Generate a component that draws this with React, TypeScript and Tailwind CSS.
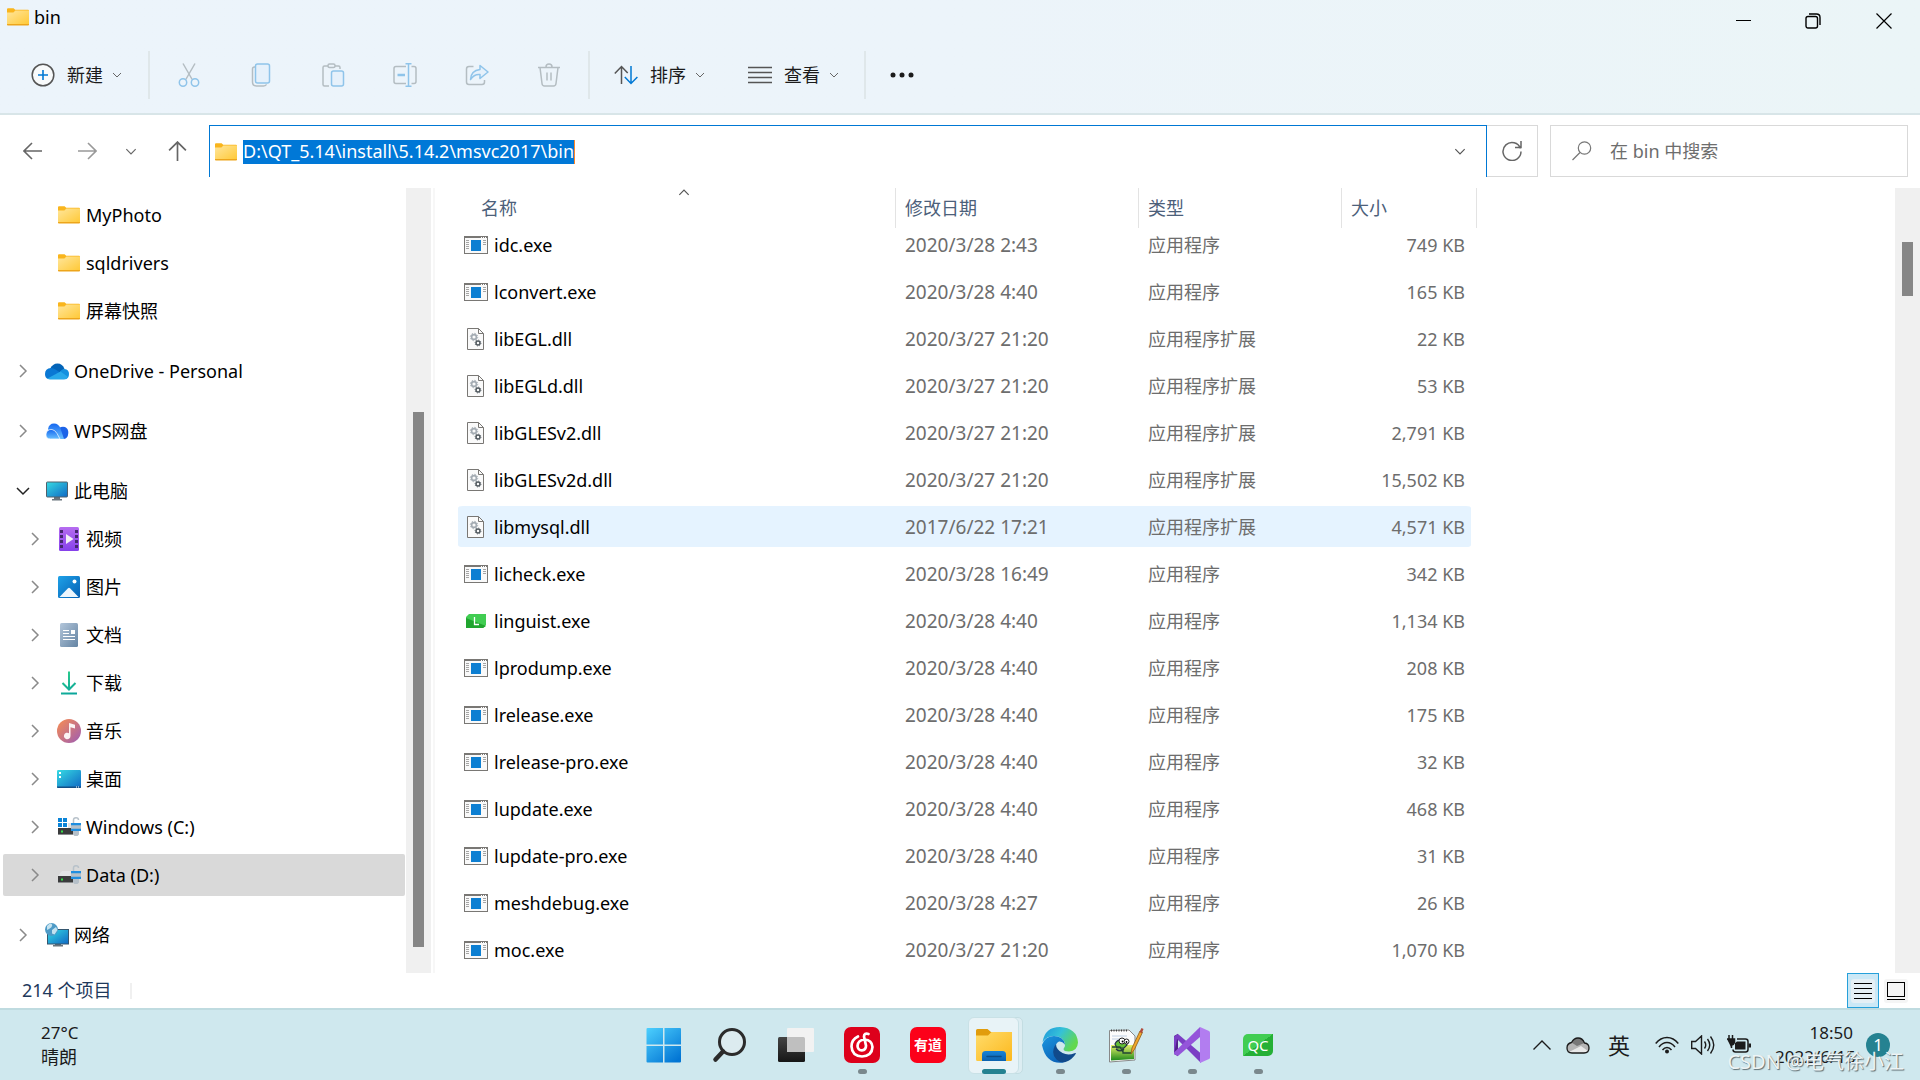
import type { ReactNode } from "react";

type IconProps = { className?: string };

/* ---------- icons ---------- */

function Chevron({ className = "" }: IconProps) {
  return (
    <svg viewBox="0 0 10 6" fill="none" stroke="currentColor" className={className}>
      <path d="M1 1l4 4 4-4" />
    </svg>
  );
}

function FolderIcon({ className = "h-[18px] w-[22px]" }: IconProps) {
  return (
    <svg viewBox="0 0 22 18" className={className}>
      <defs>
        <linearGradient id="folder" x1="0" y1="0" x2="1" y2="1">
          <stop offset="0" stopColor="#ffe69c" />
          <stop offset="1" stopColor="#ffc937" />
        </linearGradient>
      </defs>
      <path d="M0 1.2Q0 .3 1 .3h5.6l1.6 1.5H21q1 0 1 1V5H0z" fill="#f9b51d" />
      <path d="M0 4.6h6.4L8.4 2.4H22V16.4H0z" fill="url(#folder)" />
      <path d="M0 16h22v.6q0 .9-.9.9H.9q-.9 0-.9-.9z" fill="#eda51b" />
    </svg>
  );
}

function NewIcon() {
  return (
    <svg viewBox="0 0 24 24" fill="none" className="size-6">
      <circle cx="12" cy="12" r="10.8" stroke="#555" strokeWidth="1.5" fill="#f8fafb" />
      <path d="M12 7v10M7 12h10" stroke="#0078d4" strokeWidth="1.6" />
    </svg>
  );
}

function CutIcon() {
  return (
    <svg viewBox="0 0 24 24" fill="none" strokeWidth="1.5" className="size-6">
      <path d="M6 .5l9.2 16M18 .5L8.8 16.500" stroke="#b4bdc2" />
      <circle cx="6" cy="19.500" r="3.700" stroke="#8fc4ea" />
      <circle cx="18" cy="19.500" r="3.700" stroke="#8fc4ea" />
    </svg>
  );
}

function CopyIcon() {
  return (
    <svg viewBox="0 0 24 24" fill="none" strokeWidth="1.5" className="size-6">
      <path d="M6 4H5.500Q3.500 4 3.500 6v13q0 4 4 4h7q2.500 0 3-1.600" stroke="#b4bdc2" />
      <rect x="6.500" y="1" width="14" height="19" rx="2" stroke="#8fc4ea" fill="#e6f1fb" />
    </svg>
  );
}

function PasteIcon() {
  return (
    <svg viewBox="0 0 24 24" fill="none" strokeWidth="1.5" className="size-6">
      <path d="M8 23H3.500Q2 23 2 21.500V4.500Q2 3 3.500 3H7M14 3h3.500Q19 3 19 4.500V6" stroke="#b4bdc2" />
      <rect x="7" y="1" width="7" height="3.500" rx="1.500" stroke="#b4bdc2" />
      <rect x="10.500" y="8" width="12" height="15" rx="2" stroke="#8fc4ea" fill="#e6f1fb" />
    </svg>
  );
}

function RenameIcon() {
  return (
    <svg viewBox="0 0 24 24" fill="none" strokeWidth="1.5" className="size-6">
      <path d="M13 3.500H3Q1 3.500 1 5.500v13q0 2 2 2h10M18.500 3.500H21q2 0 2 2v13q0 2-2 2h-2.500" stroke="#b4bdc2" />
      <path d="M4.500 12H12" stroke="#8fc4ea" strokeWidth="2.500" />
      <path d="M12.500.8h6M15.500.8v22.400M12.500 23.200h6" stroke="#8fc4ea" />
    </svg>
  );
}

function ShareIcon() {
  return (
    <svg viewBox="0 0 24 24" fill="none" strokeWidth="1.5" strokeLinejoin="round" className="size-6">
      <path d="M8.500 3.500H4Q1.500 3.500 1.500 6v13q0 2.500 2.500 2.500h13q2.500 0 2.500-2.500v-2" stroke="#b4bdc2" />
      <path d="M15 2.500l8 6.500-8 6.500v-4Q9 11 5.500 16.500 6 7.500 15 6.500z" stroke="#8fc4ea" fill="#e6f1fb" />
    </svg>
  );
}

function DeleteIcon() {
  return (
    <svg viewBox="0 0 24 24" fill="none" stroke="#b4bdc2" strokeWidth="1.5" className="size-6">
      <path d="M1 4.500h22M3 4.500l2 16q.3 2.500 2.500 2.500h9q2.200 0 2.500-2.500l2-16M9 4Q9 1 12 1t3 3M10 9.500v8M14 9.500v8" />
    </svg>
  );
}

function SortIcon() {
  return (
    <svg viewBox="0 0 24 20" fill="none" strokeWidth="1.5" className="h-5 w-6">
      <path d="M7.500 19V1.500M.8 8.500l6.700-7 6.200 6.500" stroke="#555" />
      <path d="M17 1v17.500M10.800 12l6.200 6.500 6.400-6.500" stroke="#0078d4" />
    </svg>
  );
}

function ViewIcon() {
  return (
    <svg viewBox="0 0 24 18" stroke="#555" strokeWidth="1.500" className="h-[18px] w-6">
      <path d="M0 1.500h24M0 6.500h24M0 11.500h24M0 16.500h24" />
    </svg>
  );
}

function ArrowIcon({ className = "" }: IconProps) {
  return (
    <svg viewBox="0 0 20 20" fill="none" stroke="currentColor" strokeWidth="1.600" className={className}>
      <path d="M19 10H1.500M9 2l-8 8 8 8" />
    </svg>
  );
}

function OneDriveIcon() {
  return (
    <svg viewBox="0 0 24 17" className="h-[17px] w-6">
      <path d="M5 6Q7.500.5 12.500.5q5 0 7 5.500l-8 6z" fill="#0364b8" />
      <path d="M6 5q2.500 0 4.500 1.500l6 4L3 16Q0 15 0 11q0-5.500 6-6z" fill="#0a78d4" />
      <path d="M15 9q1.500-3 4.500-3 4.500.5 4.500 5 0 4-3 5z" fill="#1490df" />
      <path d="M2.500 15.500L15.500 8.500 23 14q-1 2.600-4 2.600H5q-1.600 0-2.500-1.100z" fill="#28a8ea" />
    </svg>
  );
}

function WpsCloudIcon() {
  return (
    <svg viewBox="0 0 24 17" className="h-[17px] w-6">
      <defs>
        <linearGradient id="wps" x1="0" y1="0" x2="0" y2="1">
          <stop offset="0" stopColor="#1668f0" />
          <stop offset="1" stopColor="#69c0ff" />
        </linearGradient>
      </defs>
      <path d="M14 5q3-2 6-1 3.500 1.500 3.300 6-.3 6-5.300 6h-5z" fill="#1c63e8" />
      <path d="M3 6Q4 .5 9 .5q4.500 0 6.500 5L19 16H8z" fill="url(#wps)" />
      <path d="M1 11q1-5 6-4.500 3 .5 5 4l3 5.500H5.500Q.5 16 1 11z" fill="url(#wps)" stroke="#fff" strokeWidth=".7" />
    </svg>
  );
}

function PcIcon() {
  return (
    <svg viewBox="0 0 24 20" className="h-5 w-6">
      <defs>
        <linearGradient id="screen" x1="0" y1="0" x2="1" y2="1">
          <stop offset="0" stopColor="#36dbe3" />
          <stop offset="1" stopColor="#0f68c4" />
        </linearGradient>
      </defs>
      <path d="M9 16h6v2h2v1.500H7V18h2z" fill="#69747c" />
      <rect x="1.500" y="1" width="21" height="15" rx=".8" fill="url(#screen)" stroke="#50606c" />
    </svg>
  );
}

function VideoIcon() {
  return (
    <svg viewBox="0 0 20 24" className="h-6 w-5">
      <defs>
        <linearGradient id="video" x1="0" y1="0" x2="0" y2="1">
          <stop offset="0" stopColor="#b66df0" />
          <stop offset="1" stopColor="#8540ea" />
        </linearGradient>
      </defs>
      <rect width="20" height="24" rx="1.500" fill="url(#video)" />
      <path d="M1 3h3v3H1zM1 8h3v3H1zM1 13h3v3H1zM1 18h3v3H1zM16 3h3v3h-3zM16 8h3v3h-3zM16 13h3v3h-3zM16 18h3v3h-3z" fill="#46266f" />
      <path d="M7 7l7.500 5L7 17z" fill="#f3f0f6" />
    </svg>
  );
}

function PictureIcon() {
  return (
    <svg viewBox="0 0 22 22" className="size-[22px]">
      <defs>
        <linearGradient id="photo" x1="0" y1="0" x2="1" y2="1">
          <stop offset="0" stopColor="#1ea2e8" />
          <stop offset="1" stopColor="#0660b4" />
        </linearGradient>
      </defs>
      <rect width="22" height="22" rx="1.500" fill="url(#photo)" />
      <path d="M1.500 21l8.500-8.800q1-1 2 0L20.500 21z" fill="#edf6fd" />
      <circle cx="16.500" cy="5.500" r="2" fill="#fff" />
    </svg>
  );
}

function DocumentIcon() {
  return (
    <svg viewBox="0 0 18 24" className="h-6 w-[18px]">
      <defs>
        <linearGradient id="doc" x1="0" y1="0" x2="1" y2="1">
          <stop offset="0" stopColor="#b3c6da" />
          <stop offset="1" stopColor="#6484a3" />
        </linearGradient>
      </defs>
      <rect width="18" height="24" rx="1.500" fill="url(#doc)" />
      <path d="M3 7.500h6M3 10.500h6M3 13.500h12M3 16.500h12" stroke="#fff" />
      <path d="M11 7h4v4h-4z" fill="#fff" />
    </svg>
  );
}

function DownloadIcon() {
  return (
    <svg viewBox="0 0 16 24" fill="none" strokeWidth="2" className="h-6 w-4">
      <defs>
        <linearGradient id="dl" gradientUnits="userSpaceOnUse" x1="0" y1="0" x2="10" y2="24">
          <stop offset="0" stopColor="#2fd08a" />
          <stop offset="1" stopColor="#0aa59c" />
        </linearGradient>
      </defs>
      <path d="M8 .5L8.010 18M1.500 12L8 18.500l6.500-6.500M0 22.500l16 .01" stroke="url(#dl)" />
    </svg>
  );
}

function MusicIcon() {
  return (
    <svg viewBox="0 0 24 24" className="size-6">
      <defs>
        <linearGradient id="music" x1="0" y1="0" x2="1" y2="1">
          <stop offset=".1" stopColor="#f0895a" />
          <stop offset="1" stopColor="#9c5cb4" />
        </linearGradient>
      </defs>
      <circle cx="12" cy="12" r="12" fill="url(#music)" />
      <path d="M12 4l6 1.800V9.500l-4.500-1.300V17a3.300 3.300 0 1 1-1.500-2.800z" fill="#fbf3f4" />
    </svg>
  );
}

function DesktopIcon() {
  return (
    <svg viewBox="0 0 24 18" className="h-[18px] w-6">
      <rect width="24" height="18" rx="1.200" fill="url(#screen)" />
      <path d="M0 16.500h24v.5q0 1-1 1H1q-1 0-1-1z" fill="#134f86" />
      <path d="M2 2h2v2H2zM2 6h2v2H2z" fill="#fff" />
      <path d="M19 17h1M21 17h1" stroke="#fff" />
    </svg>
  );
}

function DriveIcon({ system = false }: { system?: boolean }) {
  return (
    <svg viewBox="0 0 24 20" className="h-5 w-6">
      <path d="M5 6h10v5H1z" fill="#e2e4e6" />
      {system && (
        <>
          <path d="M0 0h11v11H0z" fill="#fff" />
          <path d="M1 1h4v4H1zM6 1h4v4H6zM1 6h4v4H1zM6 6h4v4H6z" fill="#0a84d8" />
        </>
      )}
      <rect x="1" y="11" width="15" height="7" fill="#3a3b3c" />
      <path d="M1 17.500h15" stroke="#8a8c8e" />
      <path d="M4 13.500h2v2H4z" fill="#35e04a" />
      <path d="M16.500 6V3q0-2.200 2.500-2.200T21.500 3" stroke="#b8c2ca" strokeWidth="1.500" fill="none" />
      <path d="M14 6h10v8h-2v3.500l-1.500 1.500h-3L16 17.500V14h-2z" fill="#b6c0c9" />
      <path d="M14 6h10v2.300H14zM14 11.700h10V14H14z" fill="#1f8ee0" />
    </svg>
  );
}

function NetworkIcon() {
  return (
    <svg viewBox="0 0 24 24" className="size-6">
      <path d="M10 21h6v1h2v1.500H8V22h2z" fill="#69747c" />
      <rect x="2.500" y="6.500" width="21" height="14.500" fill="url(#screen)" stroke="#35566f" />
      <circle cx="6.500" cy="6.500" r="6.500" fill="#4d9ac6" />
      <path d="M2 3q4-4 5-1.500T4 6l-2 1zM7 7l4-3 1.500 3-3 4.500-2.500-1z" fill="#c4e2ef" />
    </svg>
  );
}

function ExeIcon() {
  return (
    <svg viewBox="0 0 24 18" className="h-[18px] w-6">
      <rect x=".5" y=".5" width="23" height="17" fill="#f9f9f9" stroke="#797774" />
      <path d="M0 0h24v2H0z" fill="#797774" />
      <path d="M17 1.500h5" stroke="#fff" strokeDasharray="1 1" />
      <path d="M2 4.500h3M2 6.500h3M2 8.500h3M2 10.500h3M2 12.500h3M19 4.500h3M19 6.500h3M19 8.500h3" stroke="#a5a5a5" />
      <rect x="7" y="4" width="10" height="11" fill="#0d7fd2" />
    </svg>
  );
}

function DllIcon() {
  return (
    <svg viewBox="0 0 24 22" className="h-[22px] w-6" fill="none">
      <path d="M3.500.5h11l5 5v16h-16z" fill="#fafafa" stroke="#797774" />
      <path d="M14.500.5v5h5" stroke="#797774" />
      <circle cx="10" cy="9" r="2.400" stroke="#a3abb2" strokeWidth="1.600" />
      <circle cx="10" cy="9" r="3.700" stroke="#a3abb2" strokeDasharray="1.400 1.500" />
      <circle cx="14" cy="15" r="2" stroke="#50585e" strokeWidth="1.500" />
      <circle cx="14" cy="15" r="3" stroke="#50585e" strokeWidth=".8" strokeDasharray="1 1.350" />
    </svg>
  );
}

function LinguistIcon() {
  return (
    <svg viewBox="0 0 24 18" className="h-[18px] w-6">
      <path d="M5 2h17v11l-3 3H2V5z" fill="#41cd52" />
      <path d="M2 6l20 8-3 2H2z" fill="#21a52f" />
      <path d="M10.500 5v7.500H15" fill="none" stroke="#fff" strokeWidth="1.300" />
    </svg>
  );
}

/* ---------- header ---------- */

const fileTools = [
  { label: "剪切", icon: <CutIcon /> },
  { label: "复制", icon: <CopyIcon /> },
  { label: "粘贴", icon: <PasteIcon /> },
  { label: "重命名", icon: <RenameIcon /> },
  { label: "共享", icon: <ShareIcon /> },
  { label: "删除", icon: <DeleteIcon /> },
];

function ToolMenu({ icon, label }: { icon: ReactNode; label: string }) {
  return (
    <button className="flex items-center text-[18px] text-[#1b1b1b]">
      {icon}
      <span className="ml-3">{label}</span>
      <Chevron className="ml-[9px] h-[6px] w-[10px] text-[#666]" />
    </button>
  );
}

function ToolDivider() {
  return <span className="h-12 w-[2px] bg-[#dfe7ea]" />;
}

function WindowHeader() {
  return (
    <header className="border-b-2 border-[#d8e5e8] bg-linear-to-r from-[#ecf4fb] via-[#ecf4fa] to-[#ebf5f7]">
      <div className="flex h-[42px] items-start justify-between">
        <h1 className="flex h-[34px] items-center gap-[5px] pl-[7px] text-[18px] text-black">
          <FolderIcon />
          bin
        </h1>
        <div className="flex h-full">
          <button aria-label="最小化" className="flex w-[69px] items-center justify-center">
            <svg viewBox="0 0 16 16" stroke="#000" className="size-4">
              <path d="M0 7.500h15" />
            </svg>
          </button>
          <button aria-label="还原" className="flex w-[69px] items-center justify-center">
            <svg viewBox="0 0 16 16" fill="none" stroke="#000" strokeWidth="1.400" className="size-4">
              <rect x="1" y="3.500" width="11.500" height="11.500" rx="2" />
              <path d="M4 1h7.500Q15 1 15 4.500V12" />
            </svg>
          </button>
          <button aria-label="关闭" className="flex w-[73px] items-center justify-center">
            <svg viewBox="0 0 16 16" stroke="#000" strokeWidth="1.200" className="size-4">
              <path d="M.5.5l15 15M15.500.5l-15 15" />
            </svg>
          </button>
        </div>
      </div>
      <nav className="flex h-[71px] items-center pb-[5px]">
        <div className="pl-[31px]">
          <ToolMenu icon={<NewIcon />} label="新建" />
        </div>
        <div className="ml-[26px] flex items-center">
          <ToolDivider />
          <div className="flex px-[3px]">
            {fileTools.map((tool) => (
              <button key={tool.label} aria-label={tool.label} disabled className="flex w-[72px] justify-center">
                {tool.icon}
              </button>
            ))}
          </div>
          <ToolDivider />
        </div>
        <div className="ml-6 flex gap-[43px]">
          <ToolMenu icon={<SortIcon />} label="排序" />
          <ToolMenu icon={<ViewIcon />} label="查看" />
        </div>
        <div className="ml-[25px] flex items-center gap-6">
          <ToolDivider />
          <button aria-label="查看更多">
            <svg viewBox="0 0 24 6" fill="#1b1b1b" className="h-[6px] w-6">
              <circle cx="3" cy="3" r="2.500" />
              <circle cx="12" cy="3" r="2.500" />
              <circle cx="21" cy="3" r="2.500" />
            </svg>
          </button>
        </div>
      </nav>
    </header>
  );
}

function AddressRow() {
  return (
    <div className="flex items-center pt-[10px] pr-3 pb-[11px]">
      <div className="flex w-[209px] items-center pl-[23px] text-[#666]">
        <button aria-label="后退">
          <ArrowIcon className="size-5" />
        </button>
        <button aria-label="前进" className="ml-[34px] text-[#999]">
          <ArrowIcon className="size-5 rotate-180" />
        </button>
        <button aria-label="最近的位置" className="ml-7">
          <Chevron className="h-[7px] w-3" />
        </button>
        <button aria-label="向上" className="ml-[30px]">
          <ArrowIcon className="size-[21px] rotate-90" />
        </button>
      </div>
      <div className="flex h-[52px] min-w-0 flex-1 items-center border-x border-t border-[#0078d4] pr-5 pl-[5px]">
        <FolderIcon />
        <input
          aria-label="地址"
          readOnly
          value="D:\QT_5.14\install\5.14.2\msvc2017\bin"
          className="ml-[6px] field-sizing-content h-6 border-r border-[#ff8728] bg-[#0078d7] text-[18px] text-white outline-none"
        />
        <button aria-label="以前的位置" className="ml-auto">
          <Chevron className="h-[7px] w-3 text-[#555]" />
        </button>
      </div>
      <button aria-label="刷新" className="flex h-[52px] w-[51px] items-center justify-center border-y border-r border-[#d9d9d9]">
        <svg viewBox="0 0 20 20" fill="none" stroke="#666" strokeWidth="1.500" className="size-5">
          <path d="M18.500 7.500A9 9 0 1 0 19 10.500M19 0v6.500h-6" />
        </svg>
      </button>
      <label className="ml-3 flex h-[52px] w-[358px] items-center border border-[#d9d9d9] pl-[21px]">
        <svg viewBox="0 0 20 20" fill="none" stroke="#777" strokeWidth="1.200" className="size-5">
          <circle cx="12.500" cy="7" r="6.200" />
          <path d="M8 11.500L.5 19" />
        </svg>
        <input
          type="search"
          aria-label="搜索"
          placeholder="在 bin 中搜索"
          className="ml-[18px] min-w-0 flex-1 text-[18px] outline-none placeholder:text-[#6d6d6d]"
        />
      </label>
    </div>
  );
}

/* ---------- navigation pane ---------- */

type TreeItem = { label: string; icon: ReactNode; child?: boolean; leaf?: boolean; open?: boolean; selected?: boolean };

const tree: TreeItem[][] = [
  [
    { label: "MyPhoto", icon: <FolderIcon />, child: true, leaf: true },
    { label: "sqldrivers", icon: <FolderIcon />, child: true, leaf: true },
    { label: "屏幕快照", icon: <FolderIcon />, child: true, leaf: true },
  ],
  [{ label: "OneDrive - Personal", icon: <OneDriveIcon /> }],
  [{ label: "WPS网盘", icon: <WpsCloudIcon /> }],
  [
    { label: "此电脑", icon: <PcIcon />, open: true },
    { label: "视频", icon: <VideoIcon />, child: true },
    { label: "图片", icon: <PictureIcon />, child: true },
    { label: "文档", icon: <DocumentIcon />, child: true },
    { label: "下载", icon: <DownloadIcon />, child: true },
    { label: "音乐", icon: <MusicIcon />, child: true },
    { label: "桌面", icon: <DesktopIcon />, child: true },
    { label: "Windows (C:)", icon: <DriveIcon system />, child: true },
    { label: "Data (D:)", icon: <DriveIcon />, child: true, selected: true },
  ],
  [{ label: "网络", icon: <NetworkIcon /> }],
];

function TreeRow({ item }: { item: TreeItem }) {
  return (
    <li className="py-[3px]">
      <a
        href="#"
        className={`flex h-[42px] items-center rounded-[2px] text-[18px] text-black ${
          item.child ? "pl-[23px]" : "pl-[11px]"
        } ${item.selected ? "bg-[#d9d9d9]" : ""}`}
      >
        <span className="flex w-[18px] justify-center">
          {!item.leaf && (
            <svg
              viewBox="0 0 14 14"
              fill="none"
              strokeWidth="1.500"
              className={item.open ? "size-[14px] rotate-90 text-[#222]" : "size-[14px] text-[#8a8a8a]"}
              stroke="currentColor"
            >
              <path d="M4 1l6 6-6 6" />
            </svg>
          )}
        </span>
        <span className="ml-[13px] flex w-6 justify-center">{item.icon}</span>
        <span className="ml-[5px]">{item.label}</span>
      </a>
    </li>
  );
}

function NavigationPane() {
  return (
    <aside className="flex w-[435px] shrink-0 border-r-2 border-[#f7f7f7] pr-[2px]">
      <div className="flex flex-1 flex-col gap-3 py-[3px] pr-px pl-[3px]">
        {tree.map((group) => (
          <ul key={group[0].label}>
            {group.map((item) => (
              <TreeRow key={item.label} item={item} />
            ))}
          </ul>
        ))}
      </div>
      <div className="flex w-[25px] flex-col items-center bg-[#f0f0f0] pt-56">
        <div className="h-[535px] w-[11px] bg-[#868686]" />
      </div>
    </aside>
  );
}

/* ---------- file list ---------- */

const APP = "应用程序";
const EXT = "应用程序扩展";

const files = [
  { name: "idc.exe", date: "2020/3/28 2:43", type: APP, size: "749 KB" },
  { name: "lconvert.exe", date: "2020/3/28 4:40", type: APP, size: "165 KB" },
  { name: "libEGL.dll", date: "2020/3/27 21:20", type: EXT, size: "22 KB" },
  { name: "libEGLd.dll", date: "2020/3/27 21:20", type: EXT, size: "53 KB" },
  { name: "libGLESv2.dll", date: "2020/3/27 21:20", type: EXT, size: "2,791 KB" },
  { name: "libGLESv2d.dll", date: "2020/3/27 21:20", type: EXT, size: "15,502 KB" },
  { name: "libmysql.dll", date: "2017/6/22 17:21", type: EXT, size: "4,571 KB" },
  { name: "licheck.exe", date: "2020/3/28 16:49", type: APP, size: "342 KB" },
  { name: "linguist.exe", date: "2020/3/28 4:40", type: APP, size: "1,134 KB" },
  { name: "lprodump.exe", date: "2020/3/28 4:40", type: APP, size: "208 KB" },
  { name: "lrelease.exe", date: "2020/3/28 4:40", type: APP, size: "175 KB" },
  { name: "lrelease-pro.exe", date: "2020/3/28 4:40", type: APP, size: "32 KB" },
  { name: "lupdate.exe", date: "2020/3/28 4:40", type: APP, size: "468 KB" },
  { name: "lupdate-pro.exe", date: "2020/3/28 4:40", type: APP, size: "31 KB" },
  { name: "meshdebug.exe", date: "2020/3/28 4:27", type: APP, size: "26 KB" },
  { name: "moc.exe", date: "2020/3/27 21:20", type: APP, size: "1,070 KB" },
];

function FileIcon({ name }: { name: string }) {
  if (name === "linguist.exe") return <LinguistIcon />;
  return name.endsWith(".dll") ? <DllIcon /> : <ExeIcon />;
}

const headCell =
  "relative h-[33px] p-0 pt-[7px] text-left font-normal after:absolute after:top-0 after:h-10 after:w-px after:bg-[#e3e3e3]";
const bodyCell = "h-[47px] border-y-[3px] border-transparent bg-clip-padding p-0";

function FileList() {
  return (
    <main className="flex-1 pl-[23px]">
      <table className="w-[1013px] table-fixed border-separate border-spacing-0">
        <thead className="text-[18px] leading-[26px] text-[#4c607a]">
          <tr>
            <th className={`${headCell} w-[438px] pl-[23px] after:right-0`}>
              名称
              <Chevron className="absolute top-px left-[220px] h-[7px] w-3 rotate-180 text-[#555]" />
            </th>
            <th className={`${headCell} w-[243px] pl-[9px] after:right-0`}>修改日期</th>
            <th className={`${headCell} w-[203px] pl-[9px] after:right-0`}>类型</th>
            <th className={`${headCell} pl-[9px] after:-right-[6px]`}>大小</th>
          </tr>
        </thead>
        <tbody className="text-[18px] leading-6 text-[#6d6d6d]">
          {files.map((file) => (
            <tr key={file.name} className={file.name === "libmysql.dll" ? "*:bg-[#e5f3ff]" : ""}>
              <td className={`${bodyCell} rounded-l-[5px] pl-[6px] text-black`}>
                <div className="flex items-center gap-[6px]">
                  <FileIcon name={file.name} />
                  {file.name}
                </div>
              </td>
              <td className={`${bodyCell} pl-[9px] text-[19px]`}>{file.date}</td>
              <td className={`${bodyCell} pl-[9px]`}>{file.type}</td>
              <td className={`${bodyCell} rounded-r-[5px] pr-[6px] text-right`}>{file.size}</td>
            </tr>
          ))}
        </tbody>
      </table>
    </main>
  );
}

function StatusBar() {
  return (
    <footer className="flex h-[35px] items-center pr-3 pl-[22px] text-[18px] text-[#1e395b]">
      <span>214 个项目</span>
      <span className="ml-[18px] h-4 w-[2px] bg-[#f0f0f0]" />
      <div className="ml-auto flex h-full items-center gap-[5px]">
        <button aria-label="详细信息" className="flex h-full w-8 items-center justify-center border border-[#26a0da] bg-[#cbe8f6]">
          <span className="flex size-6 items-center justify-center rounded-[3px] bg-[#e5eff5]">
            <svg viewBox="0 0 18 18" stroke="#000" className="size-[18px]">
              <path d="M0 1.500h18M0 6.500h18M0 11.500h18M0 16.500h18" />
            </svg>
          </span>
        </button>
        <button aria-label="大缩略图" className="flex size-6 items-center justify-center rounded-[3px] bg-[#f5f5f5]">
          <svg viewBox="0 0 18 18" fill="none" stroke="#000" className="size-[18px]">
            <rect x=".5" y=".5" width="17" height="14" />
            <path d="M0 17.500h18" />
          </svg>
        </button>
      </div>
    </footer>
  );
}

/* ---------- taskbar ---------- */

function StartIcon() {
  return (
    <svg viewBox="0 0 36 36" className="size-9">
      <defs>
        <linearGradient id="start" gradientUnits="userSpaceOnUse" x1="0" y1="0" x2="28" y2="36">
          <stop offset="0" stopColor="#4fd2ff" />
          <stop offset="1" stopColor="#0275d4" />
        </linearGradient>
      </defs>
      <path d="M1.500 1H17v16.500H.5V2q0-1 1-1zM18.500 1H34q1 0 1 1v15.500H18.500zM.5 19H17v16.500H1.500q-1 0-1-1zM18.500 19H35v15.500q0 1-1 1H18.500z" fill="url(#start)" />
    </svg>
  );
}

function SearchIcon() {
  return (
    <svg viewBox="0 0 36 36" fill="none" stroke="#2b2b2b" className="size-9">
      <circle cx="20" cy="15" r="12.500" strokeWidth="3" fill="#dcebef" />
      <path d="M11 24.500L3.500 32.500" strokeWidth="4.500" strokeLinecap="round" />
    </svg>
  );
}

function TaskViewIcon() {
  return (
    <svg viewBox="0 0 36 36" className="size-9">
      <defs>
        <linearGradient id="tv" x1="0" y1="0" x2="0" y2="1">
          <stop offset="0" stopColor="#444" />
          <stop offset="1" stopColor="#161616" />
        </linearGradient>
      </defs>
      <rect x="0" y="10" width="27" height="25" rx="1.500" fill="url(#tv)" />
      <rect x="9" y="1" width="27" height="24" rx="1" fill="#f2f2f2" />
      <path d="M9 10h16.500q1.500 0 1.500 1.500V25H9z" fill="#bfbfbf" />
    </svg>
  );
}

function NeteaseIcon() {
  return (
    <svg viewBox="0 0 36 36" fill="none" stroke="#fff" strokeWidth="2.700" strokeLinecap="round" className="size-9">
      <rect width="36" height="36" rx="7" fill="#dd001b" stroke="none" />
      <path d="M14 9.500Q7.500 12.500 7.500 19.500 8 29 18 29.500q10-.5 10.500-9.500-.5-7-8-7.500-6.500.5-7 6.500.3 4.200 4.300 4.400Q22 23 22 18.700L20 9.500q0-3.800 4.500-2.500" />
    </svg>
  );
}

function YoudaoIcon() {
  return (
    <span className="flex size-9 items-center justify-center rounded-[7px] bg-[#fc011a] text-[14px] leading-none font-bold text-white">
      有道
    </span>
  );
}

function ExplorerIcon() {
  return (
    <svg viewBox="0 0 36 36" className="size-9">
      <defs>
        <linearGradient id="explorer" x1="0" y1="0" x2="1" y2="1">
          <stop offset="0" stopColor="#ffdc6b" />
          <stop offset="1" stopColor="#fcb81d" />
        </linearGradient>
        <linearGradient id="dock" x1="0" y1="0" x2="0" y2="1">
          <stop offset="0" stopColor="#1683d8" />
          <stop offset="1" stopColor="#0c62ae" />
        </linearGradient>
      </defs>
      <path d="M0 3.500Q0 2 1.500 2h10l3.500 3H34q2 0 2 2v3H0z" fill="#e19c0c" />
      <path d="M0 8.500h12L15.500 5H36v27.500q0 1.500-1.500 1.500h-33Q0 34 0 32.500z" fill="url(#explorer)" />
      <path d="M6 34v-6.500Q6 24 9.500 24h17q3.500 0 3.500 3.500V34z" fill="url(#dock)" />
      <path d="M11 29.500h14" stroke="#0b4c86" strokeWidth="1.500" strokeLinecap="round" />
    </svg>
  );
}

function EdgeIcon() {
  return (
    <svg viewBox="0 0 36 36" className="size-9">
      <defs>
        <linearGradient id="edgeTop" x1="0" y1="0" x2="1" y2=".5">
          <stop offset="0" stopColor="#1b94dc" />
          <stop offset=".5" stopColor="#35c1d8" />
          <stop offset="1" stopColor="#62d84e" />
        </linearGradient>
        <linearGradient id="edgeLeft" x1="0" y1="0" x2=".6" y2="1">
          <stop offset="0" stopColor="#1a96df" />
          <stop offset="1" stopColor="#0c63b8" />
        </linearGradient>
      </defs>
      <path d="M.5 15Q3 0 18 0q17 1 18 15.500-.5 8.500-9 9-5.500 0-5.500-2.500l1.500-3Q23 9.500 12 9 4.500 9 .5 15z" fill="url(#edgeTop)" />
      <path d="M0 18Q2.500 9.500 12 9q10 .8 11 8.500-3-3.500-6-3-4 2-4.500 8.500.5 9 9.500 12.500Q4 38 0 18z" fill="url(#edgeLeft)" />
      <path d="M12.500 19.500Q9 27 14.500 32.500q4 3.800 9 2.500Q30 33 34 26.500q-.3-1-1.500-.3-6.500 2.600-12-.2-6.500-3.500-6.500-9z" fill="#114a8b" />
    </svg>
  );
}

function NotepadIcon() {
  return (
    <svg viewBox="0 0 36 36" className="size-9">
      <defs>
        <linearGradient id="note" x1="0" y1="0" x2="0" y2="1">
          <stop offset="0" stopColor="#e8f26a" />
          <stop offset="1" stopColor="#1f8a1c" />
        </linearGradient>
      </defs>
      <path d="M1.500 3.500L21 3l6 6v24L1.500 35z" fill="#fcfcfc" stroke="#888" />
      <path d="M3 3.500h17" stroke="#444" strokeWidth="2" strokeDasharray="1 1.500" />
      <path d="M4 9h15M4 12h8" stroke="#c0d0e4" />
      <path d="M3 18h23v14L3 33.500z" fill="url(#note)" />
      <path d="M7 17q2-4.500 7-4 5 1 5 5l-3 3H9zM8 22q4 4 8 0" fill="#63bf35" stroke="#234" strokeWidth="1.200" />
      <circle cx="14" cy="14" r="3" fill="#fff" stroke="#222" />
      <circle cx="18.500" cy="14.500" r="2.500" fill="#fff" stroke="#222" />
      <circle cx="14.500" cy="14.500" r=".9" />
      <circle cx="18.500" cy="15" r=".9" />
      <path d="M4 20h8l3 5M15 21v5h8" fill="none" stroke="#243" strokeWidth="1.300" />
      <path d="M23 27l1-6 8-17 2.500 1.300-8 17z" fill="#f2a72c" stroke="#8a5a18" strokeWidth=".8" />
      <path d="M31.500 5l2-4 2 1-1.700 4.200z" fill="#b04a3a" />
    </svg>
  );
}

function VisualStudioIcon() {
  return (
    <svg viewBox="0 0 36 36" className="size-9">
      <path d="M0 9l4-2.200v22.500L0 27z" fill="#52218a" />
      <path d="M0 9.500L4 7l23 19.500V36L3 12 0 27z" fill="#7b3fc4" />
      <path d="M0 27V25.500L26 0v10L4 29z" fill="#9455da" />
      <path d="M26 0l9 4q1 .5 1 1.500v25q0 1-1 1.500l-9 4z" fill="#b27df0" />
    </svg>
  );
}

function QtCreatorIcon() {
  return (
    <span className="flex size-9 items-center justify-center">
      <span className="flex h-[22px] w-[30px] items-center justify-center rounded-tl-[5px] rounded-br-[5px] bg-linear-to-br from-[#41cd52] from-50% to-[#25b036] to-50% text-[15px] leading-none text-white">
        QC
      </span>
    </span>
  );
}

const apps = [
  { label: "开始", icon: <StartIcon /> },
  { label: "搜索", icon: <SearchIcon /> },
  { label: "任务视图", icon: <TaskViewIcon /> },
  { label: "网易云音乐", icon: <NeteaseIcon />, running: true },
  { label: "有道词典", icon: <YoudaoIcon /> },
  { label: "文件资源管理器", icon: <ExplorerIcon />, active: true },
  { label: "Microsoft Edge", icon: <EdgeIcon />, running: true },
  { label: "Notepad++", icon: <NotepadIcon />, running: true },
  { label: "Visual Studio", icon: <VisualStudioIcon />, running: true },
  { label: "Qt Creator", icon: <QtCreatorIcon />, running: true },
];

function Taskbar() {
  return (
    <div className="relative grid h-[72px] grid-cols-[1fr_auto_1fr] border-t-2 border-[#bfdbe0] bg-[#cfe8ee] text-[#1b1b1b]">
      <div className="flex flex-col justify-center pl-[41px] leading-6">
        <span className="text-[17px]">27°C</span>
        <span className="text-[18px]">晴朗</span>
      </div>

      <div className="flex pl-[2px]">
        {apps.map((app) => (
          <button key={app.label} aria-label={app.label} className="relative flex w-[66px] items-center justify-center">
            {app.active && (
              <>
                <span className="absolute top-[7px] left-4 h-[57px] w-[46px] rounded-[5px] border border-[#c3dde2] bg-[#dcedf2]" />
                <span className="absolute top-[7px] left-[7px] h-[57px] w-[51px] rounded-[6px] border border-[#c9e1e6] bg-[#e8f3f7]" />
              </>
            )}
            <span className="relative">{app.icon}</span>
            {app.active && <span className="absolute top-[59px] h-[5px] w-6 rounded-full bg-[#258291]" />}
            {app.running && <span className="absolute top-[59px] h-[5px] w-[9px] rounded-full bg-[#7a888d]" />}
          </button>
        ))}
      </div>

      <div className="flex items-center justify-end pr-[30px]">
        <button aria-label="显示隐藏的图标">
          <svg viewBox="0 0 18 10" fill="none" stroke="#1b1b1b" strokeWidth="1.400" className="h-[10px] w-[18px]">
            <path d="M.5 9.500L9 1l8.500 8.500" />
          </svg>
        </button>
        <svg viewBox="0 0 24 17" className="ml-[15px] h-[17px] w-6">
          <path d="M5.500 5.500Q8 1 12 1q4.500 0 6.500 5 4.500.5 4.500 5 0 5-5 5H6q-5 0-5-5 0-4.500 4.500-5.500z" fill="#b5b5b5" />
          <path d="M5.500 5.500Q8 1 12 1q4.500 0 6.500 5L11 9z" fill="#777" />
          <path d="M3 15l12-6 7 5q-1.500 2-4 2H6q-2 0-3-1z" fill="#e8e8e8" />
          <path d="M5.500 5.500Q8 1 12 1q4.500 0 6.500 5 4.500.5 4.500 5 0 5-5 5H6q-5 0-5-5 0-4.500 4.500-5.500z" fill="none" stroke="#1b1b1b" strokeWidth="1.300" />
        </svg>
        <button className="ml-[18px] text-[22px]">英</button>
        <svg viewBox="0 0 24 18" fill="none" stroke="#1b1b1b" strokeWidth="1.500" className="ml-[25px] h-[18px] w-6">
          <path d="M.7 7.500Q5.500 1.500 12 1.500t11.300 6M4 11q3.500-4.500 8-4.500t8 4.500M7.500 14q2-2.500 4.500-2.500t4.500 2.500" />
          <circle cx="12" cy="15.500" r="2" fill="#1b1b1b" stroke="none" />
        </svg>
        <svg viewBox="0 0 24 20" fill="none" stroke="#1b1b1b" strokeWidth="1.400" className="ml-3 h-5 w-6">
          <path d="M.7 6.500h3.800L10.500 1v18l-6-5.500H.7zM13.500 6.500q2.500 3.500 0 7M16.500 4q4.500 6 0 12M19.500 1.500q6.500 8.500 0 17" />
        </svg>
        <svg viewBox="0 0 24 20" fill="none" stroke="#1b1b1b" strokeWidth="1.500" className="ml-3 h-5 w-6">
          <path d="M10 4h8.500Q21 4 21 6.500v8q0 2.500-2.500 2.500H8.500Q6 17 6 14.500" />
          <path d="M8 8l2-1.500h8.500v8H8zM21.500 8.500H24v4h-2.500z" fill="#1b1b1b" stroke="none" />
          <path d="M0 4h7.500v3Q7 10 4.500 10v3M2 4V0M5.500 4V0" fill="#1b1b1b" />
        </svg>
        <div className="ml-6 flex w-[78px] flex-col text-right text-[17px] leading-6">
          <span>18:50</span>
          <span>2022/6/15</span>
        </div>
        <span className="ml-[13px] flex size-6 items-center justify-center rounded-full bg-[#258291] text-[17px] text-white">1</span>
      </div>

      <span className="absolute right-4 bottom-[6px] text-[20px] leading-6 whitespace-nowrap text-[#eef4f5] [text-shadow:1px_1px_1px_#5e6d72]">
        CSDN @电气徐小江
      </span>
    </div>
  );
}

export default function App() {
  return (
    <div className="flex min-h-screen flex-col overflow-hidden bg-white font-['Noto_Sans','Noto_Sans_CJK_SC',sans-serif]">
      <WindowHeader />
      <AddressRow />
      <div className="flex flex-1">
        <NavigationPane />
        <FileList />
        <div className="flex w-[25px] flex-col items-center bg-[#f0f0f0] pt-[54px]">
          <div className="h-[54px] w-[11px] bg-[#868686]" />
        </div>
      </div>
      <StatusBar />
      <Taskbar />
    </div>
  );
}
